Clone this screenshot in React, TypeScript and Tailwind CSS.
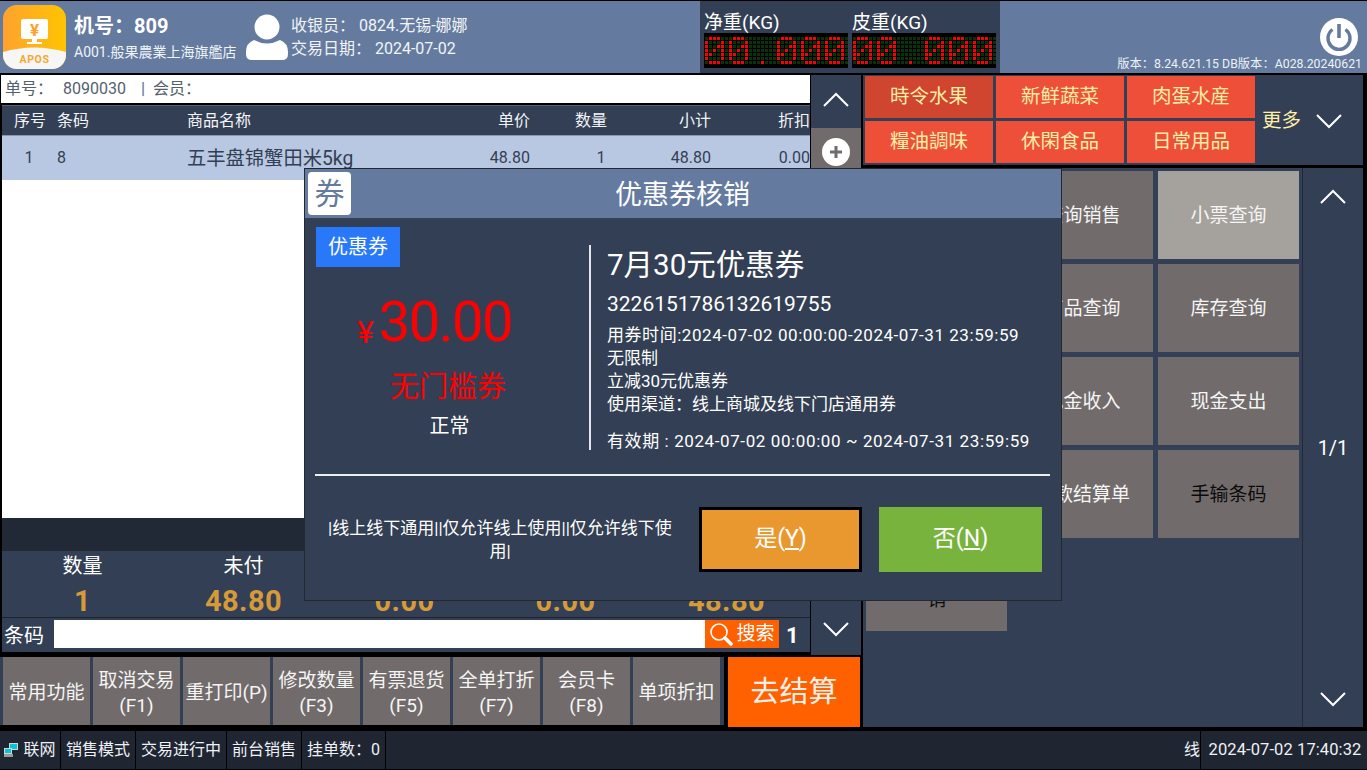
import React from "react";

const ZERO = ["01110", "10001", "10011", "10101", "11001", "10001", "01110"];

const LedPanel = () => {
  const digitCols = [0, 6, 18, 24, 30];
  const isOn = (row: number, col: number) => {
    if (row === 6 && col === 14) return true;
    return digitCols.some((start) => col >= start && col < start + 5 && ZERO[row][col - start] === "1");
  };
  const cells = [];
  for (let row = 0; row < 7; row++) {
    for (let col = 0; col < 36; col++) {
      cells.push(
        <rect key={`${row}-${col}`} x={col * 4 + 1} y={row * 4 + 4} width="3" height="3" fill={isOn(row, col) ? "#ff0000" : "#0b300b"} />
      );
    }
  }
  return (
    <svg width="144" height="35" viewBox="0 0 144 35" className="block bg-black">
      {cells}
    </svg>
  );
};

const Chevron = ({ up = false }: { up?: boolean }) => (
  <svg width="26" height="15" viewBox="0 0 26 15" fill="none" stroke="#ffffff" strokeWidth="2">
    <polyline points={up ? "1,14 13,2 25,14" : "1,1 13,13 25,1"} />
  </svg>
);

const Logo = () => (
  <svg width="63" height="64" viewBox="0 0 63 64" className="shrink-0">
    <defs>
      <linearGradient id="logoGrad" x1="0" x2="1" y1="0" y2="0">
        <stop offset="0" stopColor="#ffa22f" />
        <stop offset="1" stopColor="#ffc400" />
      </linearGradient>
      <clipPath id="logoClip">
        <rect width="63" height="64" rx="14" />
      </clipPath>
    </defs>
    <g clipPath="url(#logoClip)">
      <rect width="63" height="64" fill="url(#logoGrad)" />
      <path d="M0 47 Q31 38 63 47 V64 H0 Z" fill="#f6f6f4" />
    </g>
    <rect x="18" y="14" width="27" height="20" rx="2" fill="#ffffff" />
    <rect x="29" y="34" width="5" height="4" fill="#ffffff" />
    <rect x="24" y="37" width="15" height="2" fill="#ffffff" />
    <text x="31.5" y="31" textAnchor="middle" fontSize="17" fontWeight="700" fill="#ff9f2a" fontFamily="Roboto, sans-serif">¥</text>
    <text x="31.5" y="57.5" textAnchor="middle" fontSize="10.5" fontWeight="700" fill="#f5a833" fontFamily="Roboto, sans-serif" letterSpacing="0.6">APOS</text>
  </svg>
);

const Avatar = () => (
  <svg width="42" height="46" viewBox="0 0 42 46" className="shrink-0">
    <circle cx="21" cy="13" r="12.5" fill="#ffffff" />
    <path d="M8 26 Q21 33 34 26 Q42 29 42 38 V40 Q42 46 36 46 H6 Q0 46 0 40 V38 Q0 29 8 26 Z" fill="#ffffff" />
  </svg>
);

const PowerIcon = () => (
  <svg width="38" height="38" viewBox="0 0 38 38">
    <circle cx="19" cy="19" r="19" fill="#ffffff" />
    <path d="M12.5 11.5 A11 11 0 1 0 25.5 11.5" fill="none" stroke="#647b9f" strokeWidth="3.4" />
    <line x1="19" y1="6" x2="19" y2="20" stroke="#647b9f" strokeWidth="3.6" />
  </svg>
);

const NetIcon = () => (
  <svg width="14" height="14" viewBox="0 0 14 14" className="shrink-0">
    <rect x="5" y="0" width="9" height="7" fill="#d5d5d5" />
    <rect x="6" y="1" width="7" height="5" fill="#00c8d8" />
    <rect x="0" y="5" width="8" height="6" fill="#d5d5d5" />
    <rect x="1" y="6" width="6" height="4" fill="#00c8d8" />
    <rect x="0" y="11" width="9" height="3" fill="#9a9a9a" />
  </svg>
);

const SearchIcon = () => (
  <svg width="24" height="24" viewBox="0 0 24 24" fill="none" stroke="#ffffff">
    <circle cx="10" cy="10" r="8" strokeWidth="1.6" />
    <line x1="16" y1="16" x2="22" y2="22" strokeWidth="3.5" strokeLinecap="round" />
  </svg>
);

const categories = [
  ["時令水果", true],
  ["新鲜蔬菜", false],
  ["肉蛋水産", false],
  ["糧油調味", false],
  ["休閑食品", false],
  ["日常用品", false],
] as const;

const toolButtons = [
  { text: [] as string[] },
  { text: ["查询销售"] },
  { text: ["小票查询"], active: true },
  { text: [] as string[] },
  { text: ["商品查询"] },
  { text: ["库存查询"] },
  { text: [] as string[] },
  { text: ["现金收入"] },
  { text: ["现金支出"] },
  { text: [] as string[] },
  { text: ["付款结算单"] },
  { text: ["手输条码"], dark: true },
  { text: ["交易撤", "销"], dark: true },
];

const bottomButtons = [
  { w: "w-[87px]", lines: ["常用功能"] },
  { w: "w-[87px]", lines: ["取消交易", "(F1)"] },
  { w: "w-[87px]", lines: ["重打印(P)"] },
  { w: "w-[87px]", lines: ["修改数量", "(F3)"] },
  { w: "w-[87px]", lines: ["有票退货", "(F5)"] },
  { w: "w-[87px]", lines: ["全单打折", "(F7)"] },
  { w: "w-[87px]", lines: ["会员卡", "(F8)"] },
  { w: "w-[87px]", lines: ["单项折扣"] },
];

// the last three labels sit behind the dialog
const stats = [
  ["数量", "1"],
  ["未付", "48.80"],
  ["", "0.00"],
  ["", "0.00"],
  ["", "48.80"],
];

const statusCells = [
  { w: "w-[61px]", text: "联网", icon: true },
  { w: "w-[75px]", text: "销售模式" },
  { w: "w-[91px]", text: "交易进行中" },
  { w: "w-[75px]", text: "前台销售" },
  { w: "w-[84px]", text: "挂单数：0" },
];

const TABLE_COLS = "grid grid-cols-[53px_132px_283px_60px_122px_59px_99px] items-center";

const CouponDialog = () => (
  <div className="absolute left-[304px] top-[168px] w-[758px] h-[433px] bg-[#333f54] border border-[#23272f] flex flex-col">
    <div className="h-[49px] bg-[#647b9f] relative flex items-center justify-center shrink-0">
      <div className="absolute left-[3px] top-[3px] w-[43px] h-[43px] bg-white rounded-[4px] flex items-center justify-center text-[#647b9f] text-[30px]">券</div>
      <span className="text-white text-[27px] leading-[36px] ml-[-1px] mt-[3px]">优惠券核销</span>
    </div>
    <div className="h-[256px] flex shrink-0">
      <div className="w-[284px] shrink-0 pl-[11px] pt-[9px] flex flex-col">
        <div className="w-[84px] h-[40px] bg-[#2878f9] text-white text-[20px] flex items-center justify-center self-start">优惠券</div>
        <div className="h-[80px] mt-[8px] flex items-end justify-center pr-[36px] text-[#ff0000]">
          <span className="text-[32px] leading-[46px] mr-[5px]">¥</span>
          <span className="text-[56px] leading-[66px] tracking-[-1.5px]">30.00</span>
        </div>
        <div className="text-[#ff0000] text-[29px] leading-[40px] mt-[12px] text-center pr-[9px]">无门槛券</div>
        <div className="text-white text-[20px] leading-[28px] mt-[5px] text-center pr-[6px]">正常</div>
      </div>
      <div className="w-[2px] h-[205px] mt-[27px] bg-[#e4e6ea] shrink-0" />
      <div className="flex-1 pl-[16px] pt-[27px] text-white">
        <div className="text-[29.5px] leading-[40px]">7月30元优惠券</div>
        <div className="text-[21px] leading-[28px] mt-[5px]">3226151786132619755</div>
        <div className="text-[17px] leading-[23px] mt-[6px]">
          <div className="tracking-[0.55px] whitespace-nowrap">用券时间:2024-07-02 00:00:00-2024-07-31 23:59:59</div>
          <div>无限制</div>
          <div>立减30元优惠券</div>
          <div>使用渠道：线上商城及线下门店通用券</div>
        </div>
        <div className="text-[17px] leading-[23px] mt-[14px] tracking-[0.6px] whitespace-nowrap">有效期 : 2024-07-02 00:00:00 ~ 2024-07-31 23:59:59</div>
      </div>
    </div>
    <div className="h-[2px] ml-[10px] mr-[11px] bg-[#eceef0] shrink-0" />
    <div className="flex pl-[19px] pt-[31px]">
      <div className="w-[352px] h-[65px] text-white text-[17px] leading-[23px] text-center flex items-center justify-center shrink-0">
        |线上线下通用||仅允许线上使用||仅允许线下使用|
      </div>
      <div className="w-[163px] h-[65px] ml-[23px] bg-[#e99830] border-[3px] border-black text-white text-[23px] flex items-center justify-center">
        是(<span className="underline underline-offset-2">Y</span>)
      </div>
      <div className="w-[163px] h-[65px] ml-[17px] bg-[#78b33e] text-white text-[23px] flex items-center justify-center">
        否(<span className="underline underline-offset-2">N</span>)
      </div>
    </div>
  </div>
);

export default function App() {
  return (
    <div className="relative w-[1367px] h-[770px] bg-black overflow-hidden flex flex-col pt-px font-['Roboto','Noto_Sans_CJK_SC',sans-serif]">
      {/* top bar */}
      <div className="h-[72px] bg-[#647b9f] flex text-white shrink-0">
        <div className="pl-[3px] pt-[4px] shrink-0"><Logo /></div>
        <div className="w-[180px] pl-[8px] shrink-0">
          <div className="text-[20px] font-bold leading-[24px] mt-[13px] whitespace-nowrap">机号：809</div>
          <div className="text-[14px] leading-[20px] mt-[4px] whitespace-nowrap text-[#f0f3f8]">A001.般果農業上海旗艦店</div>
        </div>
        <div className="pt-[13px] shrink-0"><Avatar /></div>
        <div className="pl-[3px] pt-[13px] text-[16px] leading-[23px] w-[412px] text-[#f2f4f8] shrink-0">
          <div className="whitespace-nowrap">收银员： 0824.无锡-娜娜</div>
          <div className="whitespace-nowrap">交易日期： 2024-07-02</div>
        </div>
        <div className="w-[300px] h-[72px] bg-[#333f54] pl-[4px] shrink-0">
          <div className="flex text-[19px] leading-[21px] pt-[11px]">
            <span className="w-[148px]">净重(KG)</span>
            <span>皮重(KG)</span>
          </div>
          <div className="flex gap-[4px]">
            <LedPanel />
            <LedPanel />
          </div>
        </div>
        <div className="flex-1 flex flex-col items-end pr-[5px] pt-[17px]">
          <div className="pr-[4px]"><PowerIcon /></div>
          <div className="text-[12.3px] leading-[14px] mt-[1px] whitespace-nowrap text-[#eef1f6]">版本：8.24.621.15 DB版本：A028.20240621</div>
        </div>
      </div>

      {/* main area */}
      <div className="h-[652px] mt-[2px] flex shrink-0">
        <div className="w-[861px] flex flex-col shrink-0">
          <div className="h-[578px] flex shrink-0">
            <div className="w-[810px] flex flex-col pl-px shrink-0">
              <div className="h-[28px] bg-white text-[#555f6e] text-[16px] flex items-center pl-[4px] whitespace-nowrap shrink-0">
                单号：<span className="ml-[10px]">8090030</span>
                <span className="ml-[15px] text-[#647b9f] font-bold">|</span>
                <span className="ml-[8px]">会员：</span>
              </div>
              <div className={`${TABLE_COLS} mt-[2px] ml-px h-[30px] bg-[#333f54] border-t border-[#5a6373] text-[#f2f4f8] text-[16px] shrink-0`}>
                <span className="text-center pl-[3px]">序号</span>
                <span className="pl-[2px]">条码</span>
                <span>商品名称</span>
                <span className="text-right">单价</span>
                <span className="text-center">数量</span>
                <span className="text-right">小计</span>
                <span className="text-right">折扣</span>
              </div>
              <div className={`${TABLE_COLS} ml-px h-[45px] bg-[#b9c8e2] text-[#333f54] border-t border-[#8d96a6] text-[16px] shrink-0`}>
                <span className="text-center pl-[1px]">1</span>
                <span className="pl-[2px]">8</span>
                <span className="text-[19.3px] pt-[2px] whitespace-nowrap">五丰盘锦蟹田米5kg</span>
                <span className="text-right">48.80</span>
                <span className="text-center pl-[20px]">1</span>
                <span className="text-right">48.80</span>
                <span className="text-right">0.00</span>
              </div>
              <div className="h-[338px] ml-px bg-white shrink-0" />
              <div className="h-[33px] ml-px bg-[#222936] shrink-0" />
              <div className="h-[67px] ml-px bg-[#333f54] border-b border-[#1d222c] grid grid-cols-[161px_161px_161px_161px_161px] shrink-0">
                {stats.map(([label, value], i) => (
                  <div key={i} className="flex flex-col items-center">
                    <span className="h-[28px] text-white text-[20px] leading-[28px] mt-[1px]">{label}</span>
                    <span className="text-[#d59a3a] text-[29px] font-bold leading-[32px] mt-[5px] tracking-[0.4px]">{value}</span>
                  </div>
                ))}
              </div>
              <div className="h-[34px] ml-px bg-[#333f54] flex items-start shrink-0">
                <span className="w-[52px] text-white text-[20px] leading-[36px] pl-[2px] shrink-0">条码</span>
                <div className="w-[651px] h-[28px] mt-[2px] bg-white shrink-0" />
                <div className="w-[74px] h-[28px] mt-[2px] bg-[#ff6000] text-white text-[19px] flex items-center justify-center gap-[3px] shrink-0">
                  <SearchIcon />搜索
                </div>
                <span className="text-white text-[22px] font-bold leading-[36px] ml-[7px]">1</span>
              </div>
            </div>
            <div className="w-[50px] ml-px flex flex-col bg-[#333f54] mb-[-2px]">
              <div className="h-[53px] pb-[4px] flex items-center justify-center shrink-0"><Chevron up /></div>
              <div className="h-[110px] bg-[#716c6b] flex justify-center pt-[10px] shrink-0">
                <div className="w-[28px] h-[28px] rounded-full bg-white text-[#716c6b] flex items-center justify-center">
                  <svg width="16" height="16" viewBox="0 0 16 16"><path d="M6.5 2h3v4.5H14v3H9.500V14h-3V9.500H2v-3h4.500z" fill="#716c6b" /></svg>
                </div>
              </div>
              <div className="flex-1" />
              <div className="h-[54px] pt-[2px] flex items-center justify-center shrink-0"><Chevron /></div>
            </div>
          </div>
          {/* function keys */}
          <div className="h-[70px] mt-[4px] flex shrink-0">
            <div className="w-[724px] bg-[#333f54] flex gap-[3px] pl-[3px] pr-[4px] shrink-0 mb-[2px]">
              {bottomButtons.map((b, i) => (
                <div key={i} className={`${b.w} bg-[#716c6b] text-[#f5f5f5] text-[19px] leading-[25px] pt-[3px] flex flex-col items-center justify-center whitespace-nowrap`}>
                  {b.lines.map((l) => <span key={l}>{l}</span>)}
                </div>
              ))}
            </div>
            <div className="w-[132px] ml-[4px] bg-[#ff6000] text-[#f6efe8] text-[29px] pt-[2px] flex items-center justify-center shrink-0">去结算</div>
          </div>
        </div>

        {/* right side */}
        <div className="w-[500px] ml-[2px] flex flex-col shrink-0">
          <div className="h-[90px] bg-[#333f54] flex pl-[2px] pt-px shrink-0">
            <div className="grid grid-cols-[128px_128px_128px] grid-rows-[42px_42px] gap-[3px] shrink-0">
              {categories.map(([name, active]) => (
                <div key={name} className={`${active ? "bg-[#cf4530]" : "bg-[#ee4f38]"} text-[#ffeea6] text-[19.5px] flex items-center justify-center`}>{name}</div>
              ))}
            </div>
            <div className="flex items-center h-[87px] pl-[7px] pt-[2px] text-[#ffeea6] text-[19.5px]">
              <span>更多</span>
              <span className="ml-[15px] mt-[1px] flex"><Chevron /></span>
            </div>
          </div>
          <div className="h-[559px] mt-[3px] bg-[#333f54] flex shrink-0">
            <div className="w-[440px] pl-[3px] pt-[3px] shrink-0 border-r border-[#232a37]">
              <div className="grid grid-cols-[141px_141px_141px] auto-rows-[88px] gap-[5px]">
                {toolButtons.map((b, i) => (
                  <div key={i} className={`${b.active ? "bg-[#a5a29d]" : "bg-[#716c6b]"} ${b.dark ? "text-[#0b0b0b]" : "text-[#f5f5f5]"} text-[19px] leading-[25px] flex flex-col items-center justify-center`}>
                    {b.text.map((l) => <span key={l}>{l}</span>)}
                  </div>
                ))}
              </div>
            </div>
            <div className="flex-1 flex flex-col items-center justify-between text-white text-[20px] pt-[21px] pb-[20px]">
              <Chevron up />
              <span>1/1</span>
              <Chevron />
            </div>
          </div>
        </div>
      </div>

      {/* status bar */}
      <div className="h-[38px] mt-[4px] bg-[#1f2531] text-[#eef1f6] text-[16px] flex items-center shrink-0">
        {statusCells.map((c) => (
          <div key={c.text} className={`${c.w} h-full border-r border-black flex items-center justify-center gap-[5px] whitespace-nowrap shrink-0`}>
            {c.icon && <NetIcon />}
            {c.text}
          </div>
        ))}
        <div className="flex-1 h-full flex items-center justify-end overflow-hidden">线</div>
        <div className="w-[167px] h-full border-l border-black flex items-center justify-center whitespace-nowrap text-[16.5px] tracking-[0.1px] pl-[2px] shrink-0">2024-07-02 17:40:32</div>
      </div>

      <CouponDialog />
    </div>
  );
}
